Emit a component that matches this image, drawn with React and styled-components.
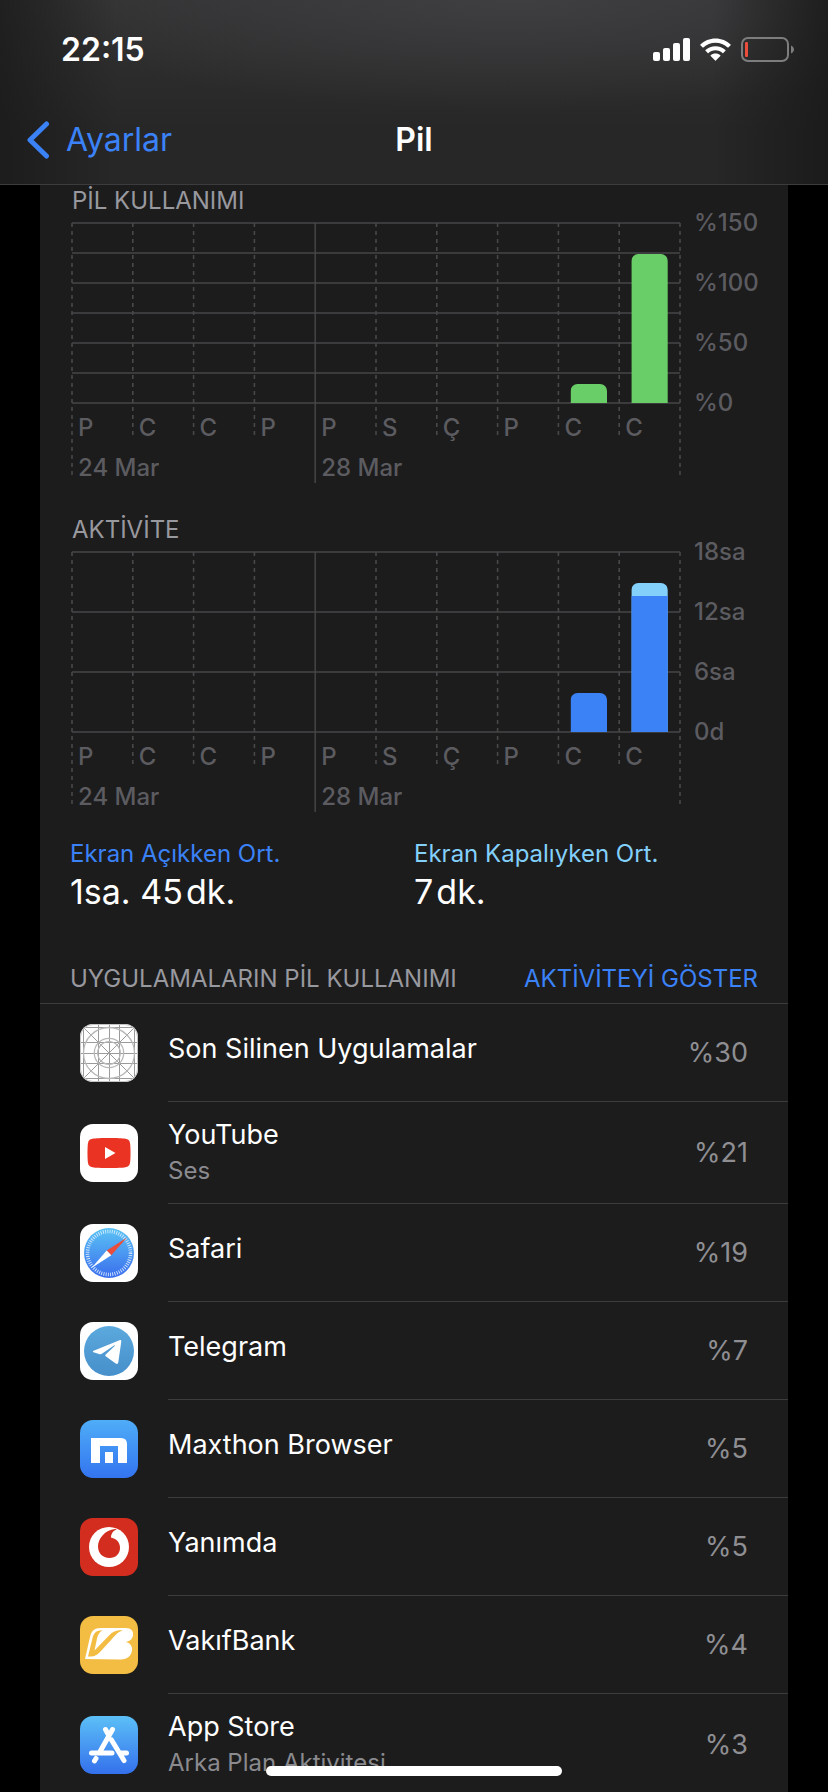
import React from "react";
import styled, { createGlobalStyle } from "styled-components";

const GlobalStyle = createGlobalStyle`
  *, *::before, *::after { box-sizing: border-box; }
  body {
    margin: 0;
    background: #000;
    color: #fff;
    font-family: Inter, "Liberation Sans", sans-serif;
  }
`;

const Screen = styled.div`
  display: flex;
  flex-direction: column;
  height: 100vh;
  overflow: hidden;
  background: #000;
`;

const Header = styled.header`
  flex: none;
  border-bottom: 1px solid #3c3c3e;
  background:
    linear-gradient(90deg, rgba(24, 24, 24, 0.7), rgba(24, 24, 24, 0) 14%, rgba(24, 24, 24, 0) 86%, rgba(24, 24, 24, 0.8)),
    radial-gradient(ellipse 60% 60% at 62% 0, rgba(70, 70, 74, 0.65), rgba(70, 70, 74, 0)),
    linear-gradient(#323233, #272727 70%);
`;

const StatusBar = styled.div`
  display: flex;
  align-items: center;
  justify-content: space-between;
  height: 96px;
  padding: 4px 34px 0 61px;
`;

const Clock = styled.time`
  font-size: 32px;
  line-height: 40px;
  font-weight: 600;
`;

const StatusIcons = styled.div`
  display: flex;
  align-items: center;
  gap: 10px;
  svg { display: block; }
`;

const NavBar = styled.nav`
  display: grid;
  grid-template-columns: 1fr auto 1fr;
  align-items: center;
  height: 88px;
  padding: 0 26px;
`;

const BackLink = styled.a`
  display: flex;
  align-items: center;
  gap: 16px;
  justify-self: start;
  color: #3b82f7;
  font-size: 32px;
  line-height: 40px;
  text-decoration: none;
`;

const Title = styled.h1`
  margin: 0;
  font-size: 32px;
  line-height: 40px;
  font-weight: 600;
`;

const Card = styled.main`
  flex: 1;
  min-height: 0;
  overflow-y: auto;
  scrollbar-width: none;
  margin: 0 40px;
  background: #1c1c1c;
`;

const Charts = styled.div`
  display: flex;
  flex-direction: column;
  gap: 26px;
  padding: 0 24px 0 32px;
`;

const Caption = styled.h2`
  margin: 0;
  color: #98989f;
  font-size: 24px;
  line-height: 32px;
  font-weight: 400;
`;

const ChartGrid = styled.div`
  display: grid;
  grid-template-columns: 1fr 84px;
  grid-template-rows: 187px 40px 40px;
  margin-top: 4px;
`;

const Plot = styled.svg`
  grid-area: 1 / 1 / 4 / 2;
  display: block;
  width: 100%;
  height: 267px;
  overflow: visible;
`;

const DayRow = styled.div`
  grid-area: 2 / 1;
  display: grid;
  grid-template-columns: repeat(10, 1fr);
`;

const WeekRow = styled.div`
  grid-area: 3 / 1;
  display: grid;
  grid-template-columns: 4fr 6fr;
`;

const AxisText = styled.span`
  padding-left: 6px;
  color: #5b5b60;
  font-size: 24px;
  line-height: 40px;
  font-weight: 500;
`;

const Scale = styled.div`
  grid-area: 1 / 2;
  display: flex;
  flex-direction: column;
  justify-content: space-between;
  height: 212px;
  margin-top: -14px;
  padding-left: 8px;
`;

const ScaleText = styled(AxisText)`
  line-height: 32px;
`;

const Averages = styled.dl`
  display: grid;
  grid-template-columns: 1fr 1fr;
  margin: 21px 0 0;
  padding: 0 30px;
`;

const Average = styled.div`
  dt {
    color: ${(p) => p.$color};
    font-size: 24px;
    line-height: 32px;
  }
  dd {
    margin: 0;
    font-size: 34px;
    line-height: 44px;
  }
`;

const ListHeader = styled.div`
  display: flex;
  justify-content: space-between;
  align-items: center;
  padding: 49px 30px 8px;
  border-bottom: 1px solid #3c3c3e;
`;

const ToggleButton = styled.button`
  padding: 0;
  border: 0;
  background: none;
  color: #3b82f7;
  font: inherit;
  font-size: 24px;
  line-height: 32px;
`;

const AppList = styled.ul`
  margin: 0;
  padding: 0;
  list-style: none;
`;

const AppRow = styled.li`
  display: flex;
  align-items: center;
  gap: 30px;
  padding-left: 40px;

  > svg { flex: none; display: block; }
`;

const AppBody = styled.div`
  flex: 1;
  display: flex;
  align-items: center;
  justify-content: space-between;
  height: ${(p) => (p.$tall ? "102px" : "98px")};
  padding-right: 40px;
  border-bottom: 1px solid #3c3c3e;
`;

const AppText = styled.div`
  display: flex;
  flex-direction: column;
  padding-bottom: ${(p) => (p.$tall ? "0" : "8px")};
`;

const AppName = styled.span`
  font-size: 27px;
  line-height: 36px;
`;

const AppNote = styled.span`
  color: #8a8a8f;
  font-size: 24px;
  line-height: 36px;
`;

const Percent = styled.span`
  color: #8e8e93;
  font-size: 27px;
  line-height: 36px;
`;

const HomeIndicator = styled.div`
  position: fixed;
  bottom: 16px;
  left: 50%;
  width: 296px;
  height: 10px;
  margin-left: -148px;
  border-radius: 5px;
  background: #fff;
`;

const DAYS = ["P", "C", "C", "P", "P", "S", "Ç", "P", "C", "C"];

function Chart({ title, scale, lines, bars }) {
  const step = 180 / (lines - 1);
  return (
    <section>
      <Caption>{title}</Caption>
      <ChartGrid>
        <Plot role="img" aria-label={title}>
          {Array.from({ length: lines }, (_, i) => (
            <line key={i} x1="0" x2="100%" y1={2 + i * step} y2={2 + i * step} stroke="#3b3b3d" strokeWidth="2" />
          ))}
          {Array.from({ length: 11 }, (_, i) => {
            const solid = i === 4;
            const end = solid ? 262 : i === 0 || i === 10 ? 258 : 218;
            return (
              <line
                key={i}
                x1={`${i * 10}%`}
                x2={`${i * 10}%`}
                y1="2"
                y2={end}
                stroke="#48484b"
                strokeWidth={solid ? 1.4 : 1.6}
                strokeDasharray={solid ? undefined : "4 4"}
              />
            );
          })}
          {bars.map((b) => (
            <svg key={b.day} x={`${b.day * 10 + 2}%`} y={182 - b.height} width="6%" height={b.height}>
              <rect width="100%" height={b.height + 10} rx="7" fill={b.top || b.color} />
              {b.top && <rect y={b.topHeight} width="100%" height={b.height - b.topHeight} fill={b.color} />}
            </svg>
          ))}
        </Plot>
        <DayRow>
          {DAYS.map((d, i) => <AxisText key={i}>{d}</AxisText>)}
        </DayRow>
        <WeekRow>
          <AxisText>24 Mar</AxisText>
          <AxisText>28 Mar</AxisText>
        </WeekRow>
        <Scale>
          {scale.map((s) => <ScaleText key={s}>{s}</ScaleText>)}
        </Scale>
      </ChartGrid>
    </section>
  );
}

function Tile({ fill, children }) {
  return (
    <svg width="58" height="58" viewBox="0 0 58 58" aria-hidden="true">
      <rect width="58" height="58" rx="13" fill={fill} />
      {children}
    </svg>
  );
}

const PlaceholderIcon = () => (
  <svg width="58" height="58" viewBox="0 0 58 58" aria-hidden="true">
    <clipPath id="tile"><rect width="58" height="58" rx="13" /></clipPath>
    <g clipPath="url(#tile)">
      <rect width="58" height="58" fill="#fff" />
      <g stroke="#9a9a9a" strokeWidth="1" fill="none">
        <path d="M3.5 0V58M18.5 0V58M29.5 0V58M39.5 0V58M54.5 0V58M0 3.5H58M0 18.5H58M0 29.5H58M0 39.5H58M0 54.5H58M3 3L55 55M55 3L3 55" />
        <g stroke="#b8b8b8" strokeWidth="1.3">
          <circle cx="29" cy="29" r="25.5" />
          <circle cx="29" cy="29" r="14.7" />
          <circle cx="29" cy="29" r="11.3" />
        </g>
      </g>
    </g>
    <rect x=".5" y=".5" width="57" height="57" rx="12.5" fill="none" stroke="#c4c4c4" />
  </svg>
);

const YouTubeIcon = () => (
  <Tile fill="#fff">
    <path d="M29 14C37 14 42 14.2 45.5 14.8C48.3 15.3 49.5 16.5 50 19C50.700 23 50.700 35 50 39C49.5 41.5 48.3 42.7 45.5 43.2C42 43.8 37 44 29 44C21 44 16 43.8 12.5 43.2C9.7 42.7 8.5 41.5 8 39C7.3 35 7.3 23 8 19C8.5 16.5 9.7 15.3 12.5 14.8C16 14.2 21 14 29 14Z" fill="#ea3323" />
    <path d="M25 23L35.5 29L25 35Z" fill="#fff" />
  </Tile>
);

const SafariIcon = () => (
  <Tile fill="#fff">
    <defs>
      <linearGradient id="safari" x1="0" y1="0" x2="0" y2="1">
        <stop offset="0" stopColor="#5bc3f5" />
        <stop offset="1" stopColor="#3a6ded" />
      </linearGradient>
    </defs>
    <circle cx="29" cy="29" r="25" fill="url(#safari)" />
    <circle cx="29" cy="29" r="21.5" fill="none" stroke="#e4f2ff" strokeWidth="3.6" strokeDasharray="0.9 1.351" opacity="0.9" />
    <path d="M47 13.5L31.3 31.2L26.7 26.6Z" fill="#eb4d3d" />
    <path d="M11.5 44L26.7 26.6L31.3 31.2Z" fill="#fff" />
  </Tile>
);

const TelegramIcon = () => (
  <Tile fill="#fff">
    <defs>
      <linearGradient id="telegram" x1="0" y1="0" x2="0" y2="1">
        <stop offset="0" stopColor="#5ba9dd" />
        <stop offset="1" stopColor="#468fcb" />
      </linearGradient>
    </defs>
    <circle cx="29" cy="29" r="25" fill="url(#telegram)" />
    <path d="M13.6 28.8L39.5 18.2C40.8 17.7 41.5 18.3 41.3 19.6L38.3 40.3C38 42 37 42.3 35.7 41.4L25.7 34.3C25 33.7 25.2 33 25.7 32.5L34.7 23.9C35.2 23.3 34.6 23.1 34 23.5L22.2 31.6C21.2 32.3 20.2 32.3 19 32L13.5 30.3C12.6 30 12.7 29.2 13.6 28.8Z" fill="#fff" />
  </Tile>
);

const MaxthonIcon = () => (
  <Tile fill="url(#maxthon)">
    <defs>
      <linearGradient id="maxthon" x1="0" y1="0" x2="0" y2="1">
        <stop offset="0" stopColor="#4fadf8" />
        <stop offset="1" stopColor="#3374f0" />
      </linearGradient>
    </defs>
    <path d="M11 18H41Q47 18 47 24V43H38V26H20V43H11Z" fill="#fff" />
    <rect x="25" y="32" width="8" height="11" fill="#fff" />
  </Tile>
);

const VodafoneIcon = () => (
  <Tile fill="#d22d1f">
    <circle cx="29" cy="29" r="20" fill="#fff" />
    <path d="M37 11C33.5 12.5 31 15.5 31 19.5C37 21 40 24.8 40 30C40 36 35.5 40 29.5 40C22.5 40 18 35 18 28.5C18 20.5 25 12 35 11Z" fill="#d22d1f" />
  </Tile>
);

const VakifIcon = () => (
  <Tile fill="#f3bd43">
    <path d="M5 43L10 21C11.5 15 14 12 21 12H46C51 12 53.5 15 53 19C52.5 23 50 25 46 26C50 27 52.5 30 52 34C51.5 40 47 43.5 41 43.5Z" fill="#fff" />
    <path d="M8 40.5L12.5 22C14 16.5 16.5 14.5 22.5 14.3C18.5 17 17.5 20 16.5 25L14.5 34.5L29 19.5C33 15.5 36 14 43 14.3C38 16 36 18.5 32 23L20.5 35.5C16.5 39.5 14 41 8 40.5Z" fill="#f3bd43" />
  </Tile>
);

const AppStoreIcon = () => (
  <Tile fill="url(#appstore)">
    <defs>
      <linearGradient id="appstore" x1="0" y1="0" x2="0" y2="1">
        <stop offset="0" stopColor="#5cc0f7" />
        <stop offset="1" stopColor="#3470ec" />
      </linearGradient>
    </defs>
    <g stroke="#fff" strokeWidth="5" strokeLinecap="round" fill="none">
      <path d="M32.5 13.5L19.5 36.5M25.5 13.5L28 18M31.5 24L44 44.5M11.5 37H32M40.5 37H46.5M16 42.5L14.5 44.8" />
    </g>
  </Tile>
);

const APPS = [
  { name: "Son Silinen Uygulamalar", percent: "%30", Icon: PlaceholderIcon },
  { name: "YouTube", note: "Ses", percent: "%21", Icon: YouTubeIcon },
  { name: "Safari", percent: "%19", Icon: SafariIcon },
  { name: "Telegram", percent: "%7", Icon: TelegramIcon },
  { name: "Maxthon Browser", percent: "%5", Icon: MaxthonIcon },
  { name: "Yanımda", percent: "%5", Icon: VodafoneIcon },
  { name: "VakıfBank", percent: "%4", Icon: VakifIcon },
  { name: "App Store", note: "Arka Plan Aktivitesi", percent: "%3", Icon: AppStoreIcon },
];

export default function App() {
  return (
    <Screen lang="tr">
      <GlobalStyle />
      <Header>
        <StatusBar>
          <Clock>22:15</Clock>
          <StatusIcons>
            <svg width="37" height="24" viewBox="0 0 37 24" fill="#fff" aria-hidden="true">
              <rect x="0" y="14" width="7" height="9" rx="2" />
              <rect x="10" y="10" width="7" height="13" rx="2" />
              <rect x="20" y="5" width="7" height="18" rx="2" />
              <rect x="30" y="0" width="7" height="23" rx="2" />
            </svg>
            <svg width="31" height="24" viewBox="0 0 32 24" fill="#fff" aria-hidden="true">
              <path d="M16 0C22.1 0 27.6 2.3 31.6 6.2Q32 6.6 31.6 7L29.3 9.3Q28.9 9.7 28.5 9.3C25.2 6.2 20.8 4.4 16 4.4S6.8 6.2 3.5 9.3Q3.1 9.7 2.7 9.3L.4 7Q0 6.6.4 6.2C4.4 2.3 9.900 0 16 0Z" />
              <path d="M16 8C20 8 23.6 9.5 26.3 12Q26.7 12.4 26.3 12.8L24 15.1Q23.6 15.5 23.2 15.1C21.3 13.4 18.8 12.3 16 12.3S10.7 13.4 8.8 15.1Q8.4 15.5 8 15.1L5.7 12.8Q5.3 12.4 5.7 12C8.4 9.5 12 8 16 8Z" />
              <path d="M16 15.5C18 15.5 19.7 16.2 21 17.4Q21.4 17.8 21 18.2L16.4 22.8Q16 23.2 15.6 22.8L11 18.2Q10.6 17.8 11 17.4C12.3 16.2 14 15.5 16 15.5Z" />
            </svg>
            <svg width="53" height="26" viewBox="0 0 53 26" aria-label="Pil düşük" role="img">
              <rect x="1" y="1" width="46" height="23" rx="6" fill="none" stroke="#7d7d7f" strokeWidth="2" />
              <path d="M50 8.500C52 9.500 53 11 53 12.500S52 15.500 50 16.500Z" fill="#7d7d7f" />
              <rect x="4" y="5" width="3" height="15" rx="1" fill="#eb4d3d" />
            </svg>
          </StatusIcons>
        </StatusBar>
        <NavBar>
          <BackLink href="#ayarlar">
            <svg width="24" height="38" viewBox="0 0 24 38" fill="none" stroke="#3b82f7" strokeWidth="5" strokeLinecap="round" strokeLinejoin="round" aria-hidden="true">
              <path d="M20.500 3L4 19L20.500 35" />
            </svg>
            Ayarlar
          </BackLink>
          <Title>Pil</Title>
        </NavBar>
      </Header>

      <Card>
        <Charts>
          <Chart
            title="PİL KULLANIMI"
            scale={["%150", "%100", "%50", "%0"]}
            lines={7}
            bars={[
              { day: 8, height: 19, color: "#69ce67" },
              { day: 9, height: 149, color: "#69ce67" },
            ]}
          />
          <Chart
            title="AKTİVİTE"
            scale={["18sa", "12sa", "6sa", "0d"]}
            lines={4}
            bars={[
              { day: 8, height: 39, color: "#3b82f7" },
              { day: 9, height: 149, color: "#3b82f7", top: "#83d0fb", topHeight: 13 },
            ]}
          />
        </Charts>
        <Averages>
          <Average $color="#3b82f7">
            <dt>Ekran Açıkken Ort.</dt>
            <dd>1sa. 45&#8202;dk.</dd>
          </Average>
          <Average $color="#83d0fb">
            <dt>Ekran Kapalıyken Ort.</dt>
            <dd>7&#8202;dk.</dd>
          </Average>
        </Averages>
        <ListHeader>
          <Caption>UYGULAMALARIN PİL KULLANIMI</Caption>
          <ToggleButton type="button">AKTİVİTEYİ GÖSTER</ToggleButton>
        </ListHeader>
        <AppList>
          {APPS.map(({ name, note, percent, Icon }) => (
            <AppRow key={name}>
              <Icon />
              <AppBody $tall={Boolean(note)}>
                <AppText $tall={Boolean(note)}>
                  <AppName>{name}</AppName>
                  {note && <AppNote>{note}</AppNote>}
                </AppText>
                <Percent>{percent}</Percent>
              </AppBody>
            </AppRow>
          ))}
        </AppList>
      </Card>
      <HomeIndicator />
    </Screen>
  );
}
